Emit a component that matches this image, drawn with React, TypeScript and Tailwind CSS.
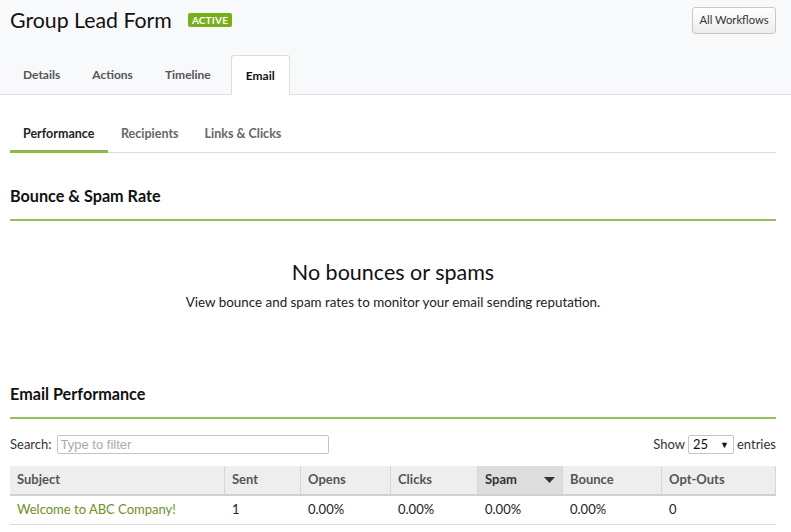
import React from "react";

const font = { fontFamily: "Lato, 'Noto Sans', sans-serif" };

export default function App() {
  const cols = [
    { label: "Subject", w: "w-[215px]" },
    { label: "Sent", w: "w-[76px]" },
    { label: "Opens", w: "w-[90px]" },
    { label: "Clicks", w: "w-[87px]" },
    { label: "Spam", w: "w-[85px]", sorted: true },
    { label: "Bounce", w: "w-[99px]" },
    { label: "Opt-Outs", w: "w-[114px]" },
  ];
  const row = ["Welcome to ABC Company!", "1", "0.00%", "0.00%", "0.00%", "0.00%", "0"];
  return (
    <div className="w-[791px] h-[532px] overflow-hidden bg-white text-[#222]" style={font}>
      <div className="bg-[#f8f9fb] border-b border-[#e1e3e6] h-[95px] px-[10px] flex flex-col">
        <div className="flex items-start justify-between pt-[7px] h-[55px]">
          <div className="flex items-center gap-[16px] pt-[1px]">
            <h1 className="text-[21.3px] leading-[24px] text-[#111]">Group Lead Form</h1>
            <span className="bg-[#78b01c] text-white text-[10px] font-bold leading-[14px] px-[4px] rounded-[2px] tracking-[0.2px]">ACTIVE</span>
          </div>
          <button className="h-[27px] w-[84px] mr-[5px] text-[11.2px] text-[#333] border border-[#c8c8c8] rounded-[3px] bg-gradient-to-b from-white to-[#ececec]">All Workflows</button>
        </div>
        <div className="flex items-end h-[40px] text-[12px] font-bold text-[#555]">
          <div className="pl-[13px] pr-[16px] h-[39px] flex items-center">Details</div>
          <div className="px-[16px] h-[39px] flex items-center">Actions</div>
          <div className="px-[16px] h-[39px] flex items-center">Timeline</div>
          <div className="ml-[4px] h-[40px] flex items-center bg-white border border-b-0 border-[#dcdde0] rounded-t-[3px] text-[#111] -mb-[1px] w-[59px] justify-center">Email</div>
        </div>
      </div>

      <div className="px-[10px] pr-[15px]">
        <div className="flex mt-[20px] border-b border-[#dcdcdc] text-[12.5px] font-bold">
          <div className="w-[98px] pl-[13px] h-[38px] flex items-center border-y-[3px] border-t-transparent border-b-[#8bb94a] -mb-[1px] text-[#222]">Performance</div>
          <div className="pl-[13px] pr-[13px] h-[38px] flex items-center border-y-[3px] border-transparent -mb-[1px] text-[#666]">Recipients</div>
          <div className="pl-[13px] h-[38px] flex items-center border-y-[3px] border-transparent -mb-[1px] text-[#666]">Links &amp; Clicks</div>
        </div>

        <h2 className="mt-[33px] text-[16.2px] font-bold text-[#111] leading-[20px]">Bounce &amp; Spam Rate</h2>
        <div className="mt-[13px] h-[2px] bg-[#94c058]" />

        <div className="flex flex-col items-center mt-[38px]">
          <div className="text-[21.5px] leading-[26px] text-[#111]">No bounces or spams</div>
          <div className="text-[13.4px] mt-[7px] text-[#222]">View bounce and spam rates to monitor your email sending reputation.</div>
        </div>

        <h2 className="mt-[72px] text-[16.2px] font-bold text-[#111] leading-[20px]">Email Performance</h2>
        <div className="mt-[13px] h-[2px] bg-[#94c058]" />

        <div className="flex items-center justify-between mt-[16px] text-[13px] text-[#333]">
          <div className="flex items-center gap-[5px]">
            <span>Search:</span>
            <input
              placeholder="Type to filter"
              className="w-[272px] h-[19px] border border-[#c4c4c4] rounded-[2px] px-[3px] text-[13px] placeholder:text-[#aaa]"
              style={{ fontFamily: "'Liberation Sans', Arial, sans-serif" }}
            />
          </div>
          <div className="flex items-center gap-[3px]">
            <span>Show</span>
            <div className="w-[46px] h-[19px] border border-[#c4c4c4] rounded-[2px] flex items-center justify-between px-[4px] text-[13px] text-[#111]">
              <span>25</span>
              <span className="text-[9px]">▼</span>
            </div>
            <span>entries</span>
          </div>
        </div>

        <div className="mt-[11px] w-[766px]">
          <div className="flex h-[30px] bg-[#eeeeee] border-b-2 border-[#d0d0d0] text-[13px] font-bold text-[#555]">
            {cols.map((c) => (
              <div
                key={c.label}
                className={`${c.w} flex items-center justify-between px-[7px] border-r border-[#d6d6d6] ${c.sorted ? "bg-[#dddddd] text-[#333]" : ""}`}
              >
                <span>{c.label}</span>
                {c.sorted && (
                  <svg width="11" height="6" viewBox="0 0 11 6">
                    <path d="M0 0 L11 0 L5.5 6 Z" fill="#333" />
                  </svg>
                )}
              </div>
            ))}
          </div>
          <div className="flex h-[29px] border-b border-[#dddddd] text-[13px] text-[#222]">
            {row.map((v, i) => (
              <div key={i} className={`${cols[i].w} flex items-center px-[7px] ${i === 0 ? "text-[#6f8f24]" : ""}`}>
                {v}
              </div>
            ))}
          </div>
        </div>
      </div>
    </div>
  );
}
